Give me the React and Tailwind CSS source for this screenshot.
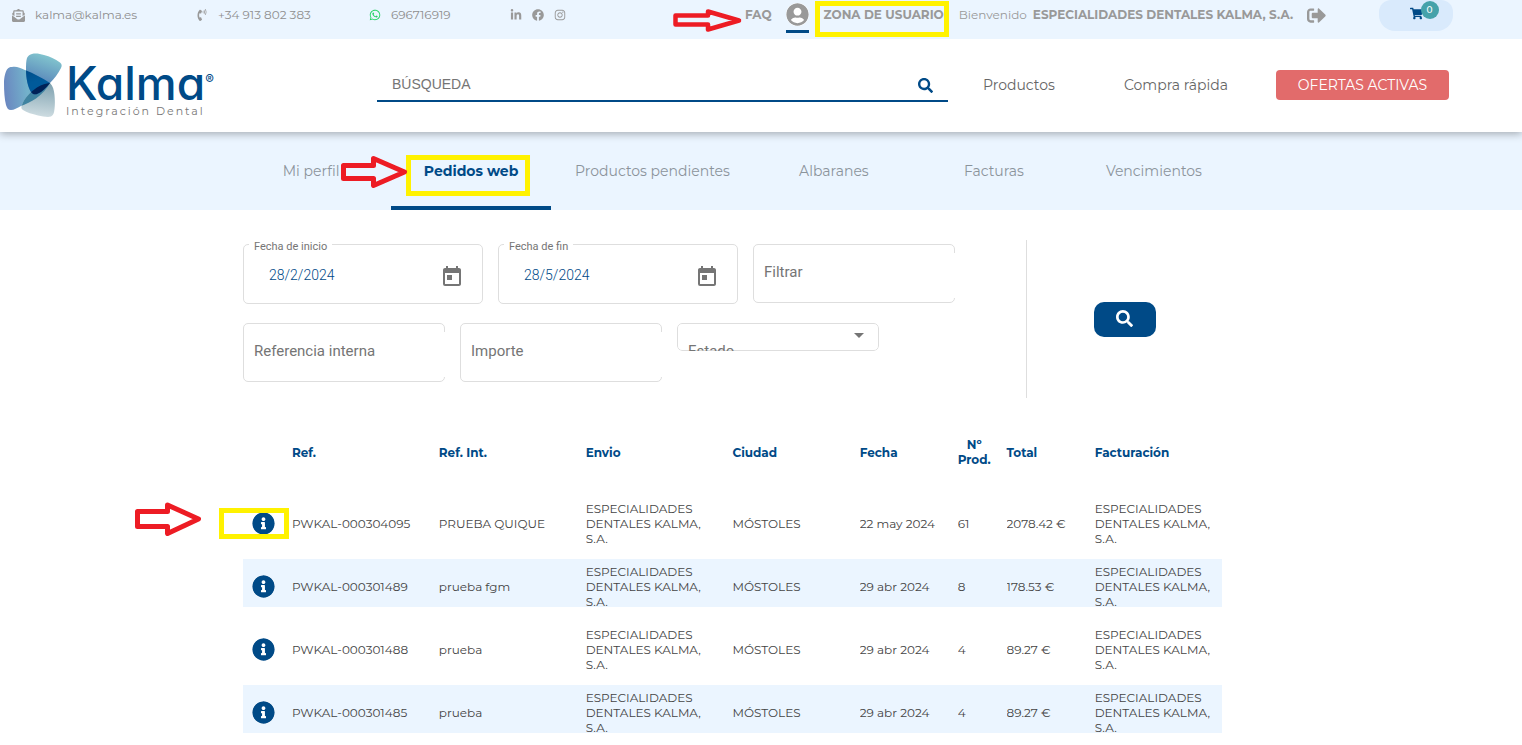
import React, { useState } from "react";
import {
  FaEnvelopeOpenText,
  FaFacebook,
  FaInfoCircle,
  FaInstagram,
  FaLinkedinIn,
  FaPhoneVolume,
  FaSearch,
  FaShoppingCart,
  FaSignOutAlt,
  FaUserCircle,
  FaWhatsapp,
} from "react-icons/fa";
import { MdToday } from "react-icons/md";

const tabs = [
  "Mi perfil",
  "Pedidos web",
  "Productos pendientes",
  "Albaranes",
  "Facturas",
  "Vencimientos",
];

const company = "ESPECIALIDADES DENTALES KALMA, S.A.";

const orders = [
  { ref: "PWKAL-000304095", refInt: "PRUEBA QUIQUE", date: "22 may 2024", items: 61, total: "2078.42 €" },
  { ref: "PWKAL-000301489", refInt: "prueba fgm", date: "29 abr 2024", items: 8, total: "178.53 €" },
  { ref: "PWKAL-000301488", refInt: "prueba", date: "29 abr 2024", items: 4, total: "89.27 €" },
  { ref: "PWKAL-000301485", refInt: "prueba", date: "29 abr 2024", items: 4, total: "89.27 €" },
];

const leafLeft = "M8 14C12 13 16 14.500 21 17C30 20.500 38 25 46 30C43 36 38 41 32 45.500C27 49 22 51 17 53C13 55 10 57 7 57C4 57 3 55 2 52C0.500 46 0 38 0 30C0 24 1.500 19 3 16.500C4.500 14.500 6 14 8 14Z";
const leafTop = "M28 1C32 0 36 1 40 2C46 3.500 51 6 56 9.500C58 11 58 13 57 15C54 21 50 26 46 30C42 35 38 39 34 40.500C31 42 29 41.500 27 39C24 34 22 26 22 17C22 12 22 8 23 5C24 2.500 26 1.500 28 1Z";
const leafBottom = "M46 30C49 33 50 37 50.500 42C51 47 51 52 50.500 56C50 60 49.500 62 47 63.500C44 64.500 39 63.500 34 62.500C28 61 23 59.500 19 57C17 56 17 54 18 52C20 46 26 39 33 34.500C38 31.500 42 30.500 46 30Z";

const Logo = () => (
  <a href="#" className="flex items-start pl-1 pt-[2px]">
    <svg width="58" height="66" viewBox="0 0 58 66" className="shrink-0">
      <defs>
        <linearGradient id="fillLeft" x1="0" y1="0.5" x2="1" y2="0.4">
          <stop offset="0" stopColor="#6a87c0" />
          <stop offset="0.5" stopColor="#73b2cb" />
          <stop offset="1" stopColor="#6aa6c4" />
        </linearGradient>
        <linearGradient id="fillTop" x1="0.7" y1="0" x2="0.4" y2="1">
          <stop offset="0" stopColor="#86cbd0" />
          <stop offset="0.8" stopColor="#5580b8" />
        </linearGradient>
        <linearGradient id="fillBottom" x1="0.6" y1="0" x2="0.5" y2="1">
          <stop offset="0" stopColor="#7fa2b0" />
          <stop offset="1" stopColor="#cfdde2" />
        </linearGradient>
        <linearGradient id="fillCore" x1="0" y1="0" x2="0.3" y2="1">
          <stop offset="0" stopColor="#003c74" />
          <stop offset="0.7" stopColor="#005a9a" />
        </linearGradient>
        <clipPath id="clipLeft">
          <path d={leafLeft} />
        </clipPath>
        <clipPath id="clipTop">
          <path d={leafTop} />
        </clipPath>
      </defs>
      <path d={leafLeft} fill="url(#fillLeft)" />
      <path d={leafBottom} fill="url(#fillBottom)" />
      <path d={leafBottom} fill="#3f83a0" clipPath="url(#clipLeft)" />
      <path d={leafTop} fill="url(#fillTop)" />
      <path d={leafTop} fill="url(#fillCore)" clipPath="url(#clipLeft)" />
      <path d={leafBottom} fill="#002257" clipPath="url(#clipTop)" />
    </svg>
    <span className="flex flex-col pl-1 pt-2">
      <span className="flex items-start font-[Inter,sans-serif] text-[46px] font-medium leading-[44px] text-[#004a87] [font-feature-settings:'cv11']">
        Kalma
        <span className="pt-3 text-[13px] leading-[13px]">®</span>
      </span>
      <span className="text-[11px] leading-[12px] tracking-[2px] text-[#777777]">
        Integración Dental
      </span>
    </span>
  </a>
);

const TopBar = () => (
  <div className="grid h-[39px] grid-cols-[184fr_173fr_141fr_235fr_646fr_143fr] whitespace-nowrap bg-[#ebf5ff] text-xs text-[#8f8f8f]">
    <a href="#" className="flex h-[30px] items-center gap-[10px] pl-3">
      <FaEnvelopeOpenText size={13} color="#999999" />
      kalma@kalma.es
    </a>
    <a href="#" className="flex h-[30px] items-center gap-[10px] pl-3">
      <FaPhoneVolume size={12} color="#999999" />
      +34 913 802 383
    </a>
    <a href="#" className="flex h-[30px] items-center gap-[10px] pl-3">
      <FaWhatsapp size={12} color="#25d366" />
      696716919
    </a>
    <div className="flex h-[30px] items-center gap-[10px] pl-3 text-[#999999]">
      <a href="#" aria-label="LinkedIn"><FaLinkedinIn size={12} /></a>
      <a href="#" aria-label="Facebook"><FaFacebook size={12} /></a>
      <a href="#" aria-label="Instagram"><FaInstagram size={12} /></a>
    </div>
    <div className="flex h-[30px] items-center pl-3 text-[#999999]">
      <a href="#" className="mr-[14px] font-bold">FAQ</a>
      <a href="#" aria-label="Usuario" className="mr-[15px] h-[33px] self-start border-b-[3px] border-[#004a87] pt-[3px]">
        <FaUserCircle size={23} className="rounded-full bg-white" />
      </a>
      <a href="#" className="mr-[15px] font-bold">ZONA DE USUARIO</a>
      <span className="mr-[6px]">Bienvenido</span>
      <span className="mr-[14px] font-bold">{company}</span>
      <button aria-label="Salir"><FaSignOutAlt size={19} /></button>
    </div>
    <div>
      <button aria-label="Carrito" className="flex h-[31px] w-[74px] items-center justify-center rounded-b-2xl rounded-t-xl bg-[#d9eafc] pb-1">
        <span className="relative">
          <FaShoppingCart size={13} color="#004a87" />
          <span className="absolute -top-[6px] left-[11px] flex h-[18px] w-[18px] items-center justify-center rounded-full bg-[#45a2aa] text-[9px] font-medium text-white">
            0
          </span>
        </span>
      </button>
    </div>
  </div>
);

const Header = () => (
  <header className="relative z-10 bg-white shadow-[0_2px_8px_rgba(0,0,0,0.3)]">
    <TopBar />
    <div className="grid h-[93px] grid-cols-[377fr_571fr_328fr_173fr_73fr] items-center pb-[2px] text-sm text-[#666666]">
      <Logo />
      <div className="flex h-[35px] items-center border-b-2 border-[#004a87] px-[15px]">
        <input
          aria-label="Búsqueda"
          placeholder="BÚSQUEDA"
          className="min-w-0 flex-1 font-['Liberation_Sans',sans-serif] text-sm outline-none placeholder:text-[#757575]"
        />
        <button aria-label="Buscar" className="pt-1">
          <FaSearch size={15} color="#004a87" />
        </button>
      </div>
      <nav className="flex justify-between pl-[35px] pr-12">
        <a href="#">Productos</a>
        <a href="#">Compra rápida</a>
      </nav>
      <button className="h-[30px] whitespace-nowrap rounded-[4px] bg-[#e26b6b] text-white">
        OFERTAS ACTIVAS
      </button>
    </div>
  </header>
);

const DateField = ({ id, label, value }) => {
  const [date, setDate] = useState(value);

  return (
    <div className="relative flex h-[60px] w-60 items-center rounded-[5px] border border-[#dedede] pl-[25px] pr-[18px] pt-[2px]">
      <label htmlFor={id} className="absolute -top-[5px] left-[5px] bg-white px-[5px] text-[11px] leading-[14px] text-[#757575]">
        {label}
      </label>
      <input
        id={id}
        value={date}
        onChange={(e) => setDate(e.target.value)}
        className="min-w-0 flex-1 text-sm font-light text-[#004a87] outline-none"
      />
      <button type="button" aria-label={"Abrir calendario: " + label} className="pt-1">
        <MdToday size={24} color="#757575" />
      </button>
    </div>
  );
};

const TextField = ({ label }) => (
  <div className="relative h-[59px] w-[202px] rounded-[5px] border border-[#dedede]">
    <input
      aria-label={label}
      placeholder={label}
      className="h-full w-full px-[10px] pb-1 text-[15px] text-[#004a87] outline-none placeholder:text-[#757575]"
    />
    {/* the outline stays open on the right side */}
    <span className="absolute -right-px bottom-1 top-2 w-px bg-white" />
  </div>
);

const Filters = () => (
  <form className="flex font-[Roboto,sans-serif]" onSubmit={(e) => e.preventDefault()}>
    <div className="flex min-h-[158px] w-4/5 flex-wrap content-start gap-x-[15px] gap-y-[19px] pt-1">
      <DateField id="start" label="Fecha de inicio" value="28/2/2024" />
      <DateField id="end" label="Fecha de fin" value="28/5/2024" />
      <TextField label="Filtrar" />
      <TextField label="Referencia interna" />
      <TextField label="Importe" />
      <div className="relative h-7 w-[202px] overflow-hidden rounded-[5px]">
        <select id="status" className="h-full w-full appearance-none rounded-[5px] border border-[#dedede] outline-none">
          <option value=""></option>
        </select>
        <label htmlFor="status" className="pointer-events-none absolute left-[11px] top-[18px] text-[15px] leading-5 text-[#757575]">
          Estado
        </label>
        <svg width="10" height="5" viewBox="0 0 10 5" className="pointer-events-none absolute right-[15px] top-[10px]">
          <path d="M0 0h10L5 5z" fill="#757575" />
        </svg>
      </div>
    </div>
    <div className="flex w-1/5 items-center justify-center border-l border-[#dedede]">
      <button aria-label="Filtrar pedidos" className="flex h-[35px] w-[62px] items-center justify-center rounded-[10px] bg-[#004a87] pb-[2px]">
        <FaSearch size={17} color="white" />
      </button>
    </div>
  </form>
);

const Cell = ({ children }) => (
  <td className="p-0">
    <div className="h-12 overflow-hidden">
      <div className="flex h-[54px] items-center">{children}</div>
    </div>
  </td>
);

const OrdersTable = () => (
  <table className="-mb-[15px] w-full table-fixed border-separate border-spacing-x-0 border-spacing-y-[15px] text-left text-xs leading-[15px] text-[#444444]">
    <colgroup>
      <col className="w-[5%]" />
      <col className="w-[15%]" />
      <col className="w-[15%]" />
      <col className="w-[15%]" />
      <col className="w-[13%]" />
      <col className="w-[10%]" />
      <col className="w-[5%]" />
      <col className="w-[9%]" />
      <col className="w-[13%]" />
    </colgroup>
    <thead>
      <tr className="h-14 text-[#004a87] *:pb-[2px]">
        <th></th>
        <th>Ref.</th>
        <th>Ref. Int.</th>
        <th>Envio</th>
        <th>Ciudad</th>
        <th>Fecha</th>
        <th><span className="inline-block text-center">Nº<br />Prod.</span></th>
        <th>Total</th>
        <th>Facturación</th>
      </tr>
    </thead>
    <tbody>
      {orders.map((order) => (
        <tr key={order.ref} className="even:bg-[#ebf5ff]">
          <Cell>
            <button aria-label={"Detalle " + order.ref} className="pl-[9px] pt-px">
              <FaInfoCircle size={23} color="#004a87" className="rounded-full bg-white" />
            </button>
          </Cell>
          <Cell>{order.ref}</Cell>
          <Cell>{order.refInt}</Cell>
          <Cell><span className="w-[125px]">{company}</span></Cell>
          <Cell>MÓSTOLES</Cell>
          <Cell>{order.date}</Cell>
          <Cell>{order.items}</Cell>
          <Cell>{order.total}</Cell>
          <Cell><span className="w-[125px]">{company}</span></Cell>
        </tr>
      ))}
    </tbody>
  </table>
);

// Help marks drawn over the page
const Marks = () => (
  <div className="pointer-events-none absolute inset-0 z-20">
    <div className="absolute left-[815px] top-px h-9 w-[134px] border-[5px] border-[#fff200]" />
    <div className="absolute left-[406px] top-[155px] h-[41px] w-[124px] border-[5px] border-[#fff200]" />
    <div className="absolute left-[219px] top-[508px] h-[31px] w-[70px] border-[5px] border-[#fff200]" />
    <svg width="70" height="24" viewBox="0 0 70 24" className="absolute left-[673px] top-[9px]">
      <path d="M2.500 6.500H35V2.500L66 11.500L35 20.500V15.500H2.500Z" fill="none" stroke="#ed1c24" strokeWidth="4.500" strokeLinejoin="round" />
    </svg>
    <svg width="68" height="34" viewBox="0 0 68 34" className="absolute left-[341px] top-[155px]">
      <path d="M2.500 10.500H32.500V3.500L63.500 17L32.500 30.500V23.500H2.500Z" fill="none" stroke="#ed1c24" strokeWidth="5" strokeLinejoin="round" />
    </svg>
    <svg width="68" height="34" viewBox="0 0 68 34" className="absolute left-[135px] top-[502px]">
      <path d="M2.500 9.500H32.500V3L63.500 17L32.500 31.500V24.500H2.500Z" fill="none" stroke="#ed1c24" strokeWidth="5" strokeLinejoin="round" />
    </svg>
  </div>
);

const App = () => {
  const [active, setActive] = useState("Pedidos web");

  return (
    <div className="relative bg-white font-[Montserrat,Inter,sans-serif]">
      <Header />

      <div className="grid grid-cols-[243fr_979fr_300fr] bg-[#ebf5ff]">
        <nav className="col-start-2 flex min-w-0 justify-center">
          {tabs.map((tab) => (
            <button
              key={tab}
              onClick={() => setActive(tab)}
              className={
                "h-[78px] min-w-40 shrink-0 border-y-4 border-t-transparent px-6 text-sm " +
                (active === tab
                  ? "border-b-[#004a87] font-bold text-[#004a87]"
                  : "border-b-transparent text-[#8b949c]")
              }
            >
              {tab}
            </button>
          ))}
        </nav>
      </div>

      <main className="grid grid-cols-[243fr_979fr_300fr] pt-[30px]">
        <div className="col-start-2 min-w-0">
          <Filters />
          <div className="pt-3">
            <OrdersTable />
          </div>
        </div>
      </main>

      <Marks />
    </div>
  );
};

export default App;
